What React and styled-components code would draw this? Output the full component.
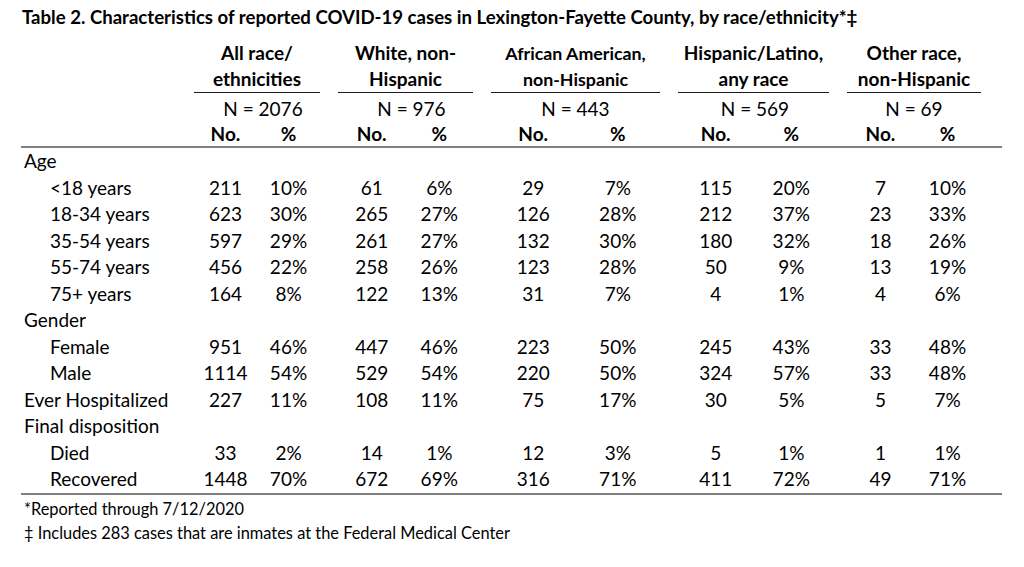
import React from "react";
import styled, { createGlobalStyle } from "styled-components";

const GlobalStyle = createGlobalStyle`
  html, body {
    margin: 0;
    padding: 0;
    background: #ffffff;
  }
  body {
    font-family: Lato, "Liberation Sans", sans-serif;
    color: #000000;
  }
`;

const COLUMNS = "155px 126px 135px 169px 151px 134px";

const groups = [
  { title: ["All race/", "ethnicities"], n: "N = 2076", shift: 12 },
  { title: ["White, non-", "Hispanic"], n: "N = 976", shift: 12 },
  { title: ["African American,", "non-Hispanic"], n: "N = 443", small: true },
  { title: ["Hispanic/Latino,", "any race"], n: "N = 569", shift: 3 },
  { title: ["Other race,", "non-Hispanic"], n: "N = 69" },
];

const rows = [
  { label: "Age" },
  { label: "<18 years", indent: true, v: [[211, "10%"], [61, "6%"], [29, "7%"], [115, "20%"], [7, "10%"]] },
  { label: "18-34 years", indent: true, v: [[623, "30%"], [265, "27%"], [126, "28%"], [212, "37%"], [23, "33%"]] },
  { label: "35-54 years", indent: true, v: [[597, "29%"], [261, "27%"], [132, "30%"], [180, "32%"], [18, "26%"]] },
  { label: "55-74 years", indent: true, v: [[456, "22%"], [258, "26%"], [123, "28%"], [50, "9%"], [13, "19%"]] },
  { label: "75+ years", indent: true, v: [[164, "8%"], [122, "13%"], [31, "7%"], [4, "1%"], [4, "6%"]] },
  { label: "Gender" },
  { label: "Female", indent: true, v: [[951, "46%"], [447, "46%"], [223, "50%"], [245, "43%"], [33, "48%"]] },
  { label: "Male", indent: true, v: [[1114, "54%"], [529, "54%"], [220, "50%"], [324, "57%"], [33, "48%"]] },
  { label: "Ever Hospitalized", v: [[227, "11%"], [108, "11%"], [75, "17%"], [30, "5%"], [5, "7%"]] },
  { label: "Final disposition" },
  { label: "Died", indent: true, v: [[33, "2%"], [14, "1%"], [12, "3%"], [5, "1%"], [1, "1%"]] },
  { label: "Recovered", indent: true, v: [[1448, "70%"], [672, "69%"], [316, "71%"], [411, "72%"], [49, "71%"]] },
];

export default function App() {
  return (
    <Page>
      <GlobalStyle />
      <Title>
        Table 2. Characteristics of reported COVID-19 cases in Lexington-Fayette County, by race/ethnicity*‡
      </Title>
      <Table>
        <HeadRow>
          <span />
          {groups.map((g) => (
            <GroupHead key={g.n} $small={g.small}>
              {g.title[0]}
              <br />
              {g.title[1]}
            </GroupHead>
          ))}
        </HeadRow>
        <NRow>
          <span />
          {groups.map((g) => (
            <NCell key={g.n} $shift={g.shift || 0}>
              {g.n}
            </NCell>
          ))}
        </NRow>
        <SubRow>
          <span />
          {groups.map((g) => (
            <Pair key={g.n}>
              <SubHead>No.</SubHead>
              <SubHead>%</SubHead>
            </Pair>
          ))}
        </SubRow>
        <Body>
          {rows.map((r) => (
            <DataRow key={r.label}>
              <Label $indent={r.indent}>{r.label}</Label>
              {(r.v || [[], [], [], [], []]).map((pair, i) => (
                <Pair key={i}>
                  <Cell>{pair[0]}</Cell>
                  <Cell>{pair[1]}</Cell>
                </Pair>
              ))}
            </DataRow>
          ))}
        </Body>
      </Table>
      <Notes>
        <Note>*Reported through 7/12/2020</Note>
        <Note>‡ Includes 283 cases that are inmates at the Federal Medical Center</Note>
      </Notes>
    </Page>
  );
}

const Page = styled.div`
  width: 1024px;
  height: 567px;
  padding: 6px 0 0 21px;
  box-sizing: border-box;
  overflow: hidden;
`;

const Title = styled.h1`
  margin: 0 0 12px 1px;
  font-size: 18.6px;
  line-height: 22px;
  font-weight: 700;
  white-space: nowrap;
`;

const Table = styled.div`
  width: 981px;
  font-size: 19px;
`;

const RowGrid = styled.div`
  display: grid;
  grid-template-columns: ${COLUMNS};
  column-gap: 18px;
  align-items: center;
`;

const HeadRow = styled(RowGrid)`
  align-items: end;
`;

const GroupHead = styled.div`
  border-bottom: 1px solid #1a1a1a;
  text-align: center;
  font-weight: 700;
  font-size: ${(p) => (p.$small ? "17.8px" : "19px")};
  line-height: 26px;
  white-space: nowrap;
`;

const NRow = styled(RowGrid)`
  height: 26px;
  padding-top: 3px;
`;

const NCell = styled.div`
  text-align: center;
  line-height: 26px;
  padding-left: ${(p) => p.$shift}px;
`;

const SubRow = styled(RowGrid)`
  height: 24px;
  border-bottom: 2px solid #808080;
`;

const Pair = styled.div`
  display: grid;
  grid-template-columns: 1fr 1fr;
`;

const SubHead = styled.div`
  text-align: center;
  font-weight: 700;
  line-height: 24px;
`;

const Body = styled.div`
  border-bottom: 2px solid #808080;
`;

const DataRow = styled(RowGrid)`
  height: 26.5px;
`;

const Label = styled.div`
  padding-left: ${(p) => (p.$indent ? "29px" : "3px")};
  white-space: nowrap;
  line-height: 26px;
`;

const Cell = styled.div`
  text-align: center;
  line-height: 26px;
`;

const Notes = styled.div`
  padding-top: 2px;
  padding-left: 3px;
`;

const Note = styled.div`
  font-size: 16.4px;
  line-height: 24px;
`;
